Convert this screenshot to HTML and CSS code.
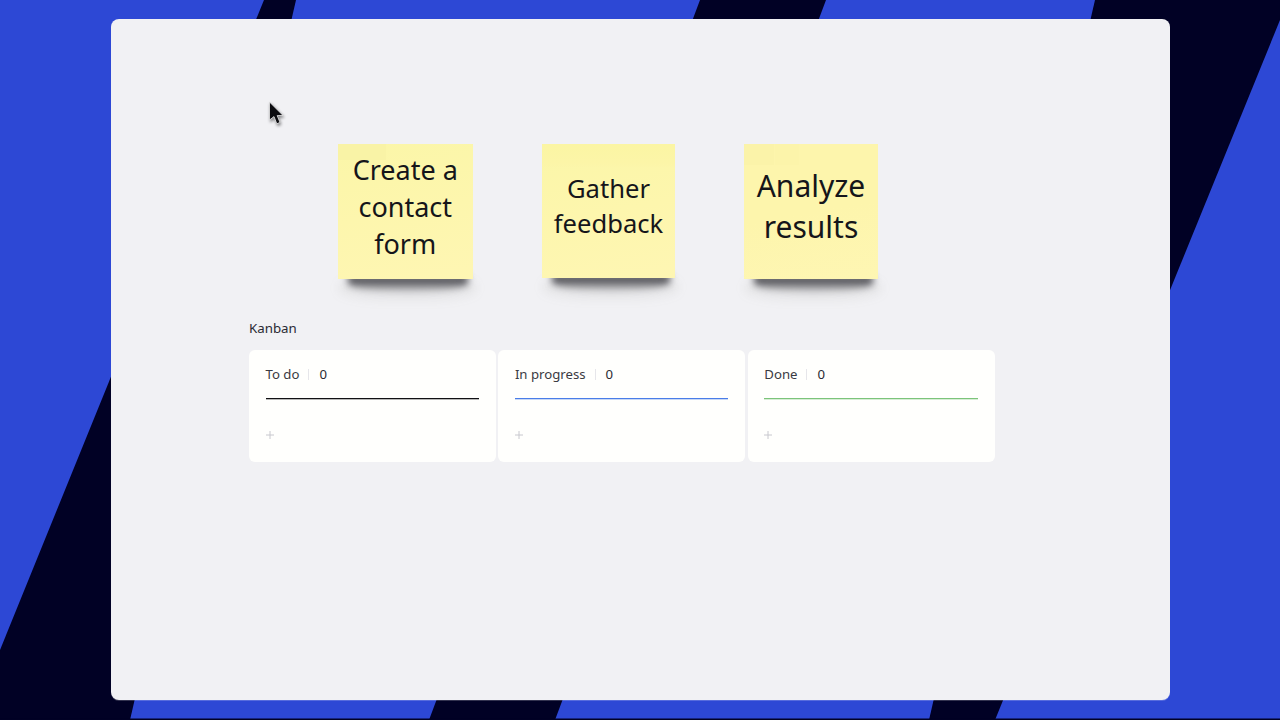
FILE: index.html
```html
<!DOCTYPE html>
<html lang="en">
<head>
<meta charset="utf-8">
<title>Kanban board</title>
<link rel="stylesheet" href="styles.css">
</head>
<body>
<svg class="backdrop" viewBox="0 0 1280 720" aria-hidden="true">
  <rect class="bg-blue" width="1280" height="720"/>
  <polygon class="bg-dark" points="264,0 296,0 130,720 0,720 0,650"/>
  <polygon class="bg-dark" points="700,0 826,0 555,720 429,720"/>
  <polygon class="bg-dark" points="1095,0 1280,0 1280,20 995,720 929,720"/>
  <rect class="bg-dark" y="718.5" width="1280" height="1.5"/>
</svg>
<main class="panel">
  <svg class="cursor" viewBox="0 0 20 28" aria-hidden="true">
    <path class="cursor-arrow" d="M2.5 1 L2.5 19 L7 15.6 L9.8 22.8 L13 21.4 L10.2 14.6 L16 14.4 Z"/>
  </svg>
  <div class="sticky sticky-one"><p class="sticky-text text-one">Create a contact form</p></div>
  <div class="sticky sticky-two"><p class="sticky-text text-two">Gather feedback</p></div>
  <div class="sticky sticky-three"><p class="sticky-text text-three">Analyze results</p></div>
  <section class="kanban">
    <h2 class="kanban-title">Kanban</h2>
    <div class="columns">
      <div class="column">
        <div class="column-head"><span>To do</span><i class="divider"></i><span class="count">0</span></div>
        <div class="rule rule-black"></div>
        <svg class="add" viewBox="0 0 10 10" aria-hidden="true"><path d="M5 1 V9 M1 5 H9"/></svg>
      </div>
      <div class="column">
        <div class="column-head"><span>In progress</span><i class="divider"></i><span class="count">0</span></div>
        <div class="rule rule-blue"></div>
        <svg class="add" viewBox="0 0 10 10" aria-hidden="true"><path d="M5 1 V9 M1 5 H9"/></svg>
      </div>
      <div class="column">
        <div class="column-head"><span>Done</span><i class="divider"></i><span class="count">0</span></div>
        <div class="rule rule-green"></div>
        <svg class="add" viewBox="0 0 10 10" aria-hidden="true"><path d="M5 1 V9 M1 5 H9"/></svg>
      </div>
    </div>
  </section>
</main>
</body>
</html>
```
FILE: styles.css
```css
* { box-sizing: border-box; }

html, body {
  margin: 0;
  width: 1280px;
  height: 720px;
  overflow: hidden;
}

body {
  position: relative;
  padding: 19px 110.5px 20px 111px;
  font-family: "Noto Sans", "Open Sans", sans-serif;
  color: #1d1d24;
}

.backdrop {
  position: absolute;
  left: 0;
  top: 0;
  width: 1280px;
  height: 720px;
}

.bg-blue { fill: #2d48d5; }
.bg-dark { fill: #010125; }

.panel {
  position: relative;
  height: 681px;
  background: #f1f1f4;
  border-radius: 8px;
  box-shadow: 0 1px 0 rgba(255, 255, 255, 0.2);
}

.cursor {
  position: absolute;
  left: 156px;
  top: 82px;
  width: 20px;
  height: 28px;
  overflow: visible;
  filter: drop-shadow(1px 2px 1.5px rgba(0, 0, 0, 0.45));
}

.cursor-arrow {
  fill: #0c0c10;
  stroke: #e8e8ea;
  stroke-width: 0.8;
}

.sticky {
  position: absolute;
  top: 125px;
  display: flex;
  align-items: center;
  justify-content: center;
  text-align: center;
  color: #15151a;
}

.sticky::before {
  content: "";
  position: absolute;
  left: 0;
  right: -4px;
  bottom: -22px;
  height: 26px;
  background: rgba(110, 110, 100, 0.07);
  filter: blur(5px);
  border-radius: 40%;
}

.sticky::after {
  content: "";
  position: absolute;
  left: 10px;
  right: 5px;
  bottom: -13px;
  height: 17px;
  background: linear-gradient(rgba(40, 40, 46, 0.8) 30%, rgba(110, 110, 120, 0.18));
  filter: blur(3.5px);
  border-radius: 0 0 50% 50%;
}

.sticky-text {
  position: relative;
  z-index: 1;
  margin: 0;
  width: 100%;
  height: 100%;
  display: flex;
  align-items: center;
  justify-content: center;
  background: linear-gradient(170deg, #fbf6a8 0%, #fdf6ad 50%, #fef6b3 100%);
}

.sticky-one { left: 227px; width: 134.5px; height: 135px; }
.sticky-two { left: 431px; width: 133px; height: 134px; }
.sticky-three { left: 633px; width: 134px; height: 135px; }

.text-one {
  padding: 0 12px 10px;
  font-size: 27px;
  line-height: 37px;
  background:
    linear-gradient(#f9f3a6, #f9f3a6) 0 0 / 48px 16px no-repeat,
    linear-gradient(170deg, #fbf6a8 0%, #fdf6ad 50%, #fef6b3 100%);
}

.text-two {
  padding: 0 6px 10px;
  font-size: 25.6px;
  line-height: 35px;
  background:
    linear-gradient(#fbf5a3, #fcf5a8 20px, transparent 24px),
    linear-gradient(170deg, #fbf6a8 0%, #fdf6ad 50%, #fef6b3 100%);
}

.text-three {
  padding: 0 10px 11px;
  font-size: 30px;
  line-height: 41px;
  background:
    linear-gradient(#fbf3a9, #fbf3a9) 0 0 / 30px 21px no-repeat,
    linear-gradient(#fcf4aa, #fcf4aa) 31px 0 / 24px 21px no-repeat,
    linear-gradient(170deg, #fdf5ac 0%, #fdf5ac 50%, #fef6b3 100%);
}

.kanban {
  position: absolute;
  left: 138px;
  top: 300px;
  width: 746px;
}

.kanban-title {
  margin: 0 0 11px;
  font-size: 13.3px;
  font-weight: 400;
  line-height: 19px;
  padding-bottom: 1px;
  color: #2a2a33;
}

.columns {
  display: grid;
  grid-template-columns: 247px 247px 247px;
  column-gap: 2.4px;
}

.column {
  height: 112px;
  padding: 14px 17px 0 16.5px;
  background: #fffffd;
  border-radius: 6px;
}

.column-head {
  display: flex;
  align-items: center;
  height: 20px;
  font-size: 13.2px;
  color: #3a3a42;
}

.divider {
  width: 1px;
  height: 11px;
  margin: 0 10px 0 9px;
  background: #e6e6ea;
}

.count { color: #2a2a33; }

.rule {
  height: 1px;
  margin-top: 14px;
}

.rule-black { background: #111114; box-shadow: 0 1px 0 rgba(17, 17, 20, 0.3); }
.rule-blue { background: #4a7de8; box-shadow: 0 1px 0 rgba(74, 125, 232, 0.3); }
.rule-green { background: #7cc47a; box-shadow: 0 1px 0 rgba(124, 196, 122, 0.3); }

.add {
  display: block;
  width: 10px;
  height: 10px;
  margin-top: 31px;
  margin-left: -1px;
  fill: none;
  stroke: #c8c8ce;
  stroke-width: 1;
}
```
